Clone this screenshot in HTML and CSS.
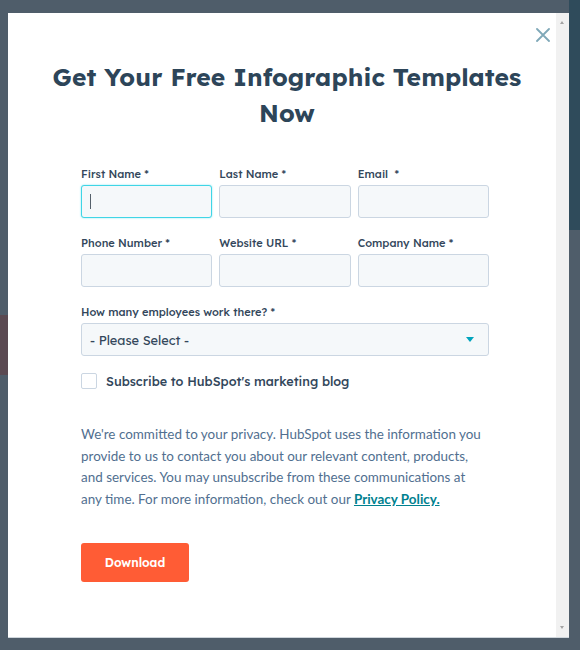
FILE: index.html
```html
<!DOCTYPE html>
<html>
<head>
<meta charset="utf-8">
<link rel="stylesheet" href="styles.css">
</head>
<body>
<div class="backdrop">
  <div class="blur-red"></div>
  <div class="blur-teal"></div>
  <div class="modal">
    <div class="content">
      <button class="close" aria-label="Close">
        <svg width="14" height="14" viewBox="0 0 14 14"><path d="M1 1 L13 13 M13 1 L1 13" stroke="#7fa8b8" stroke-width="1.8" fill="none" stroke-linecap="round"/></svg>
      </button>
      <h1 class="title">Get Your Free Infographic Templates Now</h1>
      <form class="form">
        <div class="row">
          <label class="field"><span class="label">First Name *</span><span class="input focused"><span class="caret"></span></span></label>
          <label class="field"><span class="label">Last Name *</span><span class="input"></span></label>
          <label class="field"><span class="label">Email &nbsp;*</span><span class="input"></span></label>
        </div>
        <div class="row">
          <label class="field"><span class="label">Phone Number *</span><span class="input"></span></label>
          <label class="field"><span class="label">Website URL *</span><span class="input"></span></label>
          <label class="field"><span class="label">Company Name *</span><span class="input"></span></label>
        </div>
        <div class="field wide">
          <span class="label">How many employees work there? *</span>
          <span class="input select"><span class="select-text">- Please Select -</span><span class="arrow"></span></span>
        </div>
        <div class="check">
          <span class="box"></span>
          <span class="check-text">Subscribe to HubSpot's marketing blog</span>
        </div>
        <p class="privacy">We're committed to your privacy. HubSpot uses the information you provide to us to contact you about our relevant content, products, and services. You may unsubscribe from these communications at any time. For more information, check out our <a class="link">Privacy Policy.</a></p>
        <div class="actions"><span class="btn">Download</span></div>
      </form>
    </div>
    <div class="scrollbar">
      <span class="sb-up"></span>
      <span class="sb-down"></span>
    </div>
  </div>
</div>
</body>
</html>
```
FILE: styles.css
```css
* { box-sizing: border-box; }
html, body { margin: 0; padding: 0; }
body {
  width: 580px;
  height: 650px;
  overflow: hidden;
  background: #4f5d6a;
  font-family: "Lexend Deca", Inter, "Noto Sans", sans-serif;
}
.backdrop {
  position: relative;
  width: 580px;
  height: 650px;
  padding: 13px 0 0 8px;
}
.blur-red {
  position: absolute;
  left: 0; top: 315px;
  width: 8px; height: 60px;
  background: #5b4a52;
}
.blur-teal {
  position: absolute;
  right: 0; top: 0;
  width: 11px; height: 230px;
  background: #2f4b5b;
}
.modal {
  position: relative;
  width: 561px;
  height: 625px;
  background: #fff;
  display: flex;
  border-bottom: 1px solid #cfd6dc;
}
.content {
  position: relative;
  flex: 1;
  padding: 46px 0 0 73px;
}
.close {
  position: absolute;
  top: 15px; right: 6px;
  width: 14px; height: 14px;
  padding: 0; border: 0; background: none;
  display: flex;
}
.title {
  margin: 0 0 0 -73px;
  text-align: center;
  font-size: 24.6px;
  line-height: 36px;
  font-weight: 700;
  color: #2d4559;
  padding: 0 20px 0 30px;
  letter-spacing: 0.1px;
}
.form {
  width: 408px;
  margin-top: 35px;
}
.row {
  display: grid;
  grid-template-columns: repeat(3, 1fr);
  gap: 7px;
  margin-bottom: 17px;
}
.field {
  display: flex;
  flex-direction: column;
}
.label {
  font-size: 11px;
  line-height: 16px;
  font-weight: 500;
  color: #33475b;
  margin-bottom: 3px;
  white-space: pre;
}
.input {
  display: flex;
  align-items: center;
  height: 33px;
  background: #f5f8fa;
  border: 1px solid #cbd6e2;
  border-radius: 3px;
}
.input.focused {
  border: 1px solid #3fd5e6;
  box-shadow: 0 0 2px #7fe3ee;
}
.caret {
  width: 1px;
  height: 15px;
  margin-left: 8px;
  background: #55606b;
}
.wide { margin-bottom: 17px; }
.select {
  padding: 0 14px 0 8px;
  justify-content: space-between;
}
.select-text {
  font-size: 12.8px;
  color: #33475b;
}
.arrow {
  width: 0; height: 0;
  border-left: 4px solid transparent;
  border-right: 4px solid transparent;
  border-top: 5px solid #00a4bd;
}
.check {
  display: flex;
  align-items: center;
  gap: 9px;
}
.box {
  width: 16px; height: 16px;
  border: 1.5px solid #cbd6e2;
  border-radius: 2px;
  background: #fff;
}
.check-text {
  font-size: 12.6px;
  font-weight: 500;
  color: #33475b;
}
.privacy {
  margin: 35px 0 0;
  font-family: Lato, Inter, sans-serif;
  font-size: 13.45px;
  line-height: 21.7px;
  color: #516f90;
}
.link {
  color: #00818f;
  font-weight: 700;
  text-decoration: underline;
}
.actions { margin-top: 32px; }
.btn {
  display: inline-flex;
  align-items: center;
  justify-content: center;
  width: 108px;
  height: 39px;
  background: #ff5c35;
  color: #fff;
  font-size: 12px;
  font-weight: 600;
  border-radius: 3px;
}
.scrollbar {
  position: relative;
  width: 13px;
  background: #f1f1f1;
}
.sb-up, .sb-down {
  position: absolute;
  left: 4px;
  width: 0; height: 0;
  border-left: 2.5px solid transparent;
  border-right: 2.5px solid transparent;
}
.sb-up { top: 8px; border-bottom: 3px solid #a3a3a3; }
.sb-down { bottom: 8px; border-top: 3px solid #a3a3a3; }
```
